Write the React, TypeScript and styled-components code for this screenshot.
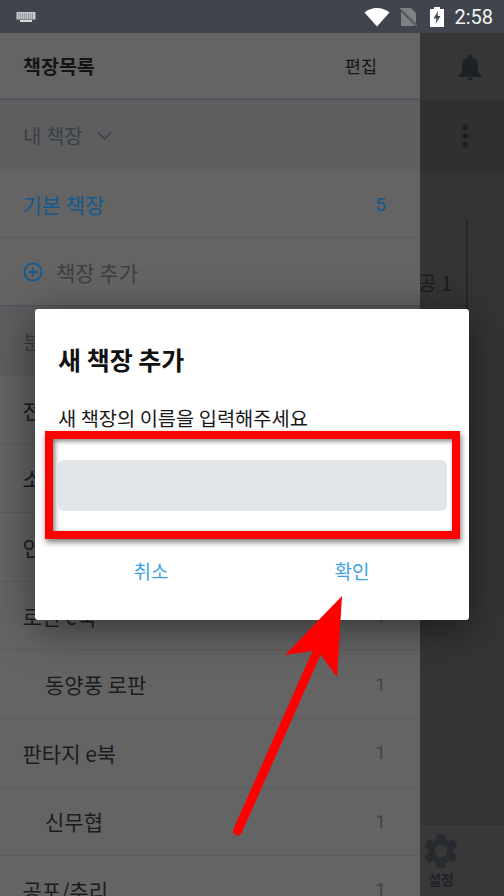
import React from 'react'
import styled, {createGlobalStyle} from 'styled-components'

const GlobalStyle = createGlobalStyle`
    html, body{
        margin: 0;
        padding: 0;
        background: #333535;
    }
    body{
        font-family: "Noto Sans CJK KR", "Noto Sans", sans-serif;
    }
`

const Screen = styled.div`
    position: relative;
    width: 504px;
    height: 896px;
    overflow: hidden;
    display: flex;
    flex-direction: column;
    background: #333535;
`

const StatusBar = styled.div`
    height: 33px;
    flex: none;
    display: flex;
    align-items: center;
    padding: 0 11px 0 16px;
    background: #40454d;
    color: #f4f4f4;
`

const StatusIcons = styled.div`
    margin-left: auto;
    display: flex;
    align-items: center;
`

const Clock = styled.span`
    font-family: Roboto, sans-serif;
    font-size: 20px;
    margin-left: 10px;
`

const Body = styled.div`
    flex: 1;
    min-height: 0;
    display: flex;
`

const Drawer = styled.div`
    width: 420px;
    flex: none;
    display: flex;
    flex-direction: column;
    background: #646464;
`

const DrawerHeader = styled.div`
    height: 67px;
    flex: none;
    display: flex;
    align-items: center;
    justify-content: space-between;
    padding: 0 43px 0 23px;
    box-sizing: border-box;
    border-bottom: 2px solid #53565a;
`

const HeaderTitle = styled.span`
    font-size: 19.5px;
    font-weight: 700;
    color: #141414;
`

const HeaderAction = styled.span`
    font-size: 17.5px;
    color: #141414;
`

const Section = styled.div<{$height?: number}>`
    height: ${p => p.$height ?? 71}px;
    flex: none;
    display: flex;
    align-items: center;
    gap: 14px;
    padding-left: 23px;
    background: #5d5e60;
    font-size: 20px;
    color: #3c3f43;
`

const Row = styled.div<{$indent?: boolean; $active?: boolean; $height?: number}>`
    height: ${p => p.$height ?? 68.6}px;
    flex: none;
    box-sizing: border-box;
    display: flex;
    align-items: center;
    justify-content: space-between;
    padding: 0 34px 0 ${p => (p.$indent ? 45 : 22.5)}px;
    border-bottom: 1px solid #5b5b5b;
    font-size: 21px;
    color: ${p => (p.$active ? '#14598f' : '#1b1c1e')};
`

const Count = styled.span<{$active?: boolean}>`
    font-family: Roboto, sans-serif;
    font-size: 19px;
    color: ${p => (p.$active ? '#14598f' : '#434547')};
`

const AddRow = styled(Row)`
    justify-content: flex-start;
    gap: 13px;
    padding-left: 23px;
    color: #3c3f43;
    border-bottom: 2px solid #53565a;
`

const Behind = styled.div`
    flex: 1;
    min-width: 0;
    display: flex;
    flex-direction: column;
`

const BehindTop = styled.div`
    height: 67px;
    flex: none;
    display: flex;
    align-items: center;
    padding-left: 37px;
    background: #363636;
`

const BehindBar = styled.div`
    height: 71px;
    flex: none;
    display: flex;
    align-items: center;
    padding-left: 42px;
    background: #2f3030;
`

const Dots = styled.div`
    display: flex;
    flex-direction: column;
    gap: 3px;

    span{
        width: 6px;
        height: 6px;
        border-radius: 50%;
        background: #1d2025;
    }
`

const BehindContent = styled.div`
    flex: 1;
    min-height: 0;
    display: flex;
    flex-direction: column;
    align-items: flex-start;
    padding-top: 49px;
    background: #333535;
`

const BookCard = styled.div`
    width: 48px;
    height: 140px;
    flex: none;
    box-sizing: border-box;
    border-right: 2px solid #242628;
    padding: 48px 14px 0 0;
    overflow: hidden;
    white-space: nowrap;
    direction: rtl;
    font-size: 20px;
    color: #1b1c1e;
`

const BehindNav = styled.div`
    margin-top: auto;
    height: 70px;
    width: 100%;
    flex: none;
    box-sizing: border-box;
    border-top: 1px solid #3b3c3d;
    display: flex;
    flex-direction: column;
    align-items: center;
    padding: 3px 42px 0 0;
    background: #383838;
`

const NavLabel = styled.span`
    font-size: 14px;
    font-weight: 700;
    line-height: 15px;
    color: #1f2328;
`

const Dialog = styled.div`
    position: absolute;
    left: 35px;
    top: 309px;
    width: 434px;
    height: 311px;
    box-sizing: border-box;
    padding: 0 22px 0 23px;
    display: flex;
    flex-direction: column;
    background: #fff;
    border-radius: 3px;
    box-shadow: 0 8px 40px rgba(0, 0, 0, 0.5);
`

const DialogTitle = styled.div`
    margin-top: 28px;
    height: 44px;
    display: flex;
    align-items: center;
    font-size: 25px;
    font-weight: 700;
    color: #111;
`

const DialogText = styled.div`
    margin-top: 21px;
    height: 30px;
    display: flex;
    align-items: center;
    font-size: 19.8px;
    color: #1a1a1a;
`

const NameInput = styled.div`
    margin-top: 28px;
    height: 51px;
    border-radius: 6px;
    background: #e3e6e9;
`

const DialogButtons = styled.div`
    margin: 46px -5.5px 0 -7.5px;
    display: grid;
    grid-template-columns: 1fr 1fr;
    justify-items: center;
`

const DialogButton = styled.span`
    font-size: 19px;
    color: #3ca2e6;
`

const Highlight = styled.div`
    position: absolute;
    left: 45px;
    top: 431px;
    width: 415px;
    height: 108px;
    box-sizing: border-box;
    border: 8px solid #fe0000;
    box-shadow: 1px 3px 6px rgba(0, 0, 0, 0.55), inset 2px 2px 5px rgba(0, 0, 0, 0.5);
    pointer-events: none;
`

const ArrowMark = styled.svg`
    position: absolute;
    left: 0;
    top: 0;
`

const books = [
    {name: '전체', count: 5},
    {name: '소설', count: 1},
    {name: '인문', count: 1},
    {name: '로판 e북', count: 1},
    {name: '동양풍 로판', count: 1, indent: true},
    {name: '판타지 e북', count: 1},
    {name: '신무협', count: 1, indent: true},
    {name: '공포/추리', count: 1},
]

const App = () => {
    return (
        <Screen>
            <GlobalStyle />
            <StatusBar>
                <svg width="20" height="12" viewBox="0 0 20 12">
                    <rect x="0.5" y="1" width="19" height="7.5" fill="#c9cbce" />
                    <path d="M2 3h16M2 5h16M2 7h16" stroke="#40454d" strokeWidth="0.7" strokeDasharray="1.2 0.8" />
                    <rect x="4" y="9" width="12" height="2" fill="#d8d9db" />
                </svg>
                <StatusIcons>
                    <svg width="26" height="20" viewBox="0 0 26 20">
                        <path d="M0.5 5.5C7.5 -0.5 18.5 -0.5 25.500 5.5L13 19.5Z" fill="#fff" />
                    </svg>
                    <svg width="20" height="20" viewBox="0 0 20 20" style={{marginLeft: 9}}>
                        <path d="M2 1h10l5 5v13H2Z" fill="#7d8084" />
                        <path d="M1 2l17 17" stroke="#40454d" strokeWidth="2.4" />
                        <path d="M1 1l17 18" stroke="#7d8084" strokeWidth="1" />
                    </svg>
                    <svg width="14" height="20" viewBox="0 0 14 20" style={{marginLeft: 11}}>
                        <path d="M4 0h6v2h4v18H0V2h4Z" fill="#fff" />
                        <path d="M8 4L3.5 11.5H6.500L5.500 17L10.500 9H7.500Z" fill="#40454d" />
                    </svg>
                    <Clock>2:58</Clock>
                </StatusIcons>
            </StatusBar>
            <Body>
                <Drawer>
                    <DrawerHeader>
                        <HeaderTitle>책장목록</HeaderTitle>
                        <HeaderAction>편집</HeaderAction>
                    </DrawerHeader>
                    <Section>
                        내 책장
                        <svg width="15" height="10" viewBox="0 0 15 10">
                            <path d="M1 1.5L7.5 8L14 1.5" fill="none" stroke="#3c3f43" strokeWidth="1.5" />
                        </svg>
                    </Section>
                    <Row $active $height={67}>
                        기본 책장
                        <Count $active>5</Count>
                    </Row>
                    <AddRow $height={69}>
                        <svg width="20" height="20" viewBox="0 0 20 20">
                            <circle cx="10" cy="10" r="8.6" fill="none" stroke="#14598f" strokeWidth="1.8" />
                            <path d="M10 5.5v9M5.500 10h9" stroke="#14598f" strokeWidth="1.8" />
                        </svg>
                        책장 추가
                    </AddRow>
                    <Section $height={69}>분류</Section>
                    {books.map((book) => (
                        <Row key={book.name} $indent={book.indent}>
                            {book.name}
                            <Count>{book.count}</Count>
                        </Row>
                    ))}
                </Drawer>
                <Behind>
                    <BehindTop>
                        <svg width="26" height="28" viewBox="0 0 26 28">
                            <path d="M13 1.5a2 2 0 0 1 2 2v1C19.500 5.500 21 9 21 13v6l3.500 3.500v1.500H1.500v-1.500L5 19v-6c0-4 1.500-7.500 6-8.500v-1a2 2 0 0 1 2-2ZM10.500 25h5a2.500 2.500 0 0 1-5 0Z" fill="#1d2025" />
                        </svg>
                    </BehindTop>
                    <BehindBar>
                        <Dots>
                            <span />
                            <span />
                            <span />
                        </Dots>
                    </BehindBar>
                    <BehindContent>
                        <BookCard>공 1</BookCard>
                        <BehindNav>
                            <svg width="42" height="42" viewBox="0 0 24 24">
                                <path d="M19.140 12.940c.04-.3.060-.61.060-.94 0-.32-.020-.64-.070-.94l2.030-1.580a.49.49 0 0 0 .12-.61l-1.920-3.320a.49.49 0 0 0-.59-.22l-2.390.96c-.5-.38-1.030-.7-1.620-.94l-.36-2.540a.48.48 0 0 0-.48-.41h-3.840a.47.47 0 0 0-.47.41l-.36 2.540c-.59.24-1.130.57-1.620.94l-2.390-.96a.48.48 0 0 0-.59.22L2.740 8.870a.47.47 0 0 0 .12.61l2.030 1.580c-.05.3-.09.63-.09.94s.020.64.070.94l-2.030 1.580a.49.49 0 0 0-.12.61l1.920 3.320c.12.22.37.29.59.22l2.390-.96c.5.38 1.030.7 1.620.94l.36 2.540c.05.24.24.41.48.41h3.840c.24 0 .44-.17.47-.41l.36-2.540c.59-.24 1.130-.56 1.620-.94l2.390.96c.22.08.47 0 .59-.22l1.920-3.320a.47.47 0 0 0-.12-.61l-2.010-1.580ZM12 15.600a3.600 3.600 0 1 1 0-7.200 3.600 3.600 0 0 1 0 7.200Z" fill="#272b30" />
                            </svg>
                            <NavLabel>설정</NavLabel>
                        </BehindNav>
                    </BehindContent>
                </Behind>
            </Body>
            <Dialog>
                <DialogTitle>새 책장 추가</DialogTitle>
                <DialogText>새 책장의 이름을 입력해주세요</DialogText>
                <NameInput />
                <DialogButtons>
                    <DialogButton>취소</DialogButton>
                    <DialogButton>확인</DialogButton>
                </DialogButtons>
            </Dialog>
            <Highlight />
            <ArrowMark width="504" height="896" viewBox="0 0 504 896">
                <path d="M237.500 831L316 654" stroke="#fe0000" strokeWidth="9" strokeLinecap="round" fill="none" />
                <path d="M342 596L285 655L312 651L321 655L337 677Z" fill="#fe0000" />
            </ArrowMark>
        </Screen>
    )
}

export default App
